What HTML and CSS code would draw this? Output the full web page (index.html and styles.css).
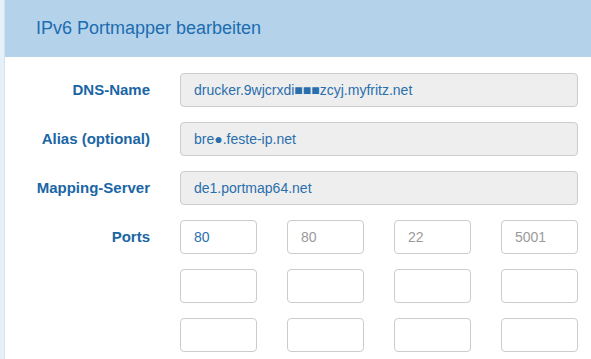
FILE: index.html
```html
<!DOCTYPE html>
<html lang="de">
<head>
    <meta charset="UTF-8">
    <meta name="viewport" content="width=device-width, initial-scale=1.0">
    <title>IPv6 Portmapper bearbeiten</title>
    <link rel="stylesheet" href="styles.css">
</head>
<body>
    <div class="panel">
        <div class="panel-heading">
            <h3>IPv6 Portmapper bearbeiten</h3>
        </div>
        <div class="panel-body">
            <form class="form-grid">
                <label for="dns">DNS-Name</label>
                <input type="text" id="dns" class="readonly" value="drucker.9wjcrxdi&#9632;&#9632;&#9632;zcyj.myfritz.net" readonly>

                <label for="alias">Alias (optional)</label>
                <input type="text" id="alias" class="readonly" value="bre&#9679;.feste-ip.net" readonly>

                <label for="server">Mapping-Server</label>
                <input type="text" id="server" class="readonly" value="de1.portmap64.net" readonly>

                <label for="p1">Ports</label>
                <div class="ports">
                    <input type="text" id="p1" value="80">
                    <input type="text" placeholder="80">
                    <input type="text" placeholder="22">
                    <input type="text" placeholder="5001">
                    <input type="text">
                    <input type="text">
                    <input type="text">
                    <input type="text">
                    <input type="text">
                    <input type="text">
                    <input type="text">
                    <input type="text">
                </div>
            </form>
        </div>
    </div>
</body>
</html>
```

FILE: styles.css
```css
* {
    margin: 0;
    padding: 0;
    box-sizing: border-box;
    font-family: 'Liberation Sans', Arial, sans-serif;
}

body {
    background: #e6f0f8;
    padding-left: 4px;
    overflow: hidden;
}

.panel {
    background: #fff;
    border-left: 1px solid #d3e2ee;
    min-height: 100vh;
}

.panel-heading {
    background: #b4d3ea;
    height: 57px;
    padding: 18px 0 0 31px;
}

.panel-heading h3 {
    font-size: 18px;
    font-weight: normal;
    color: #1c6cb1;
}

.panel-body {
    padding: 16px 13px 0 0;
}

.form-grid {
    display: grid;
    grid-template-columns: 145px 1fr;
    column-gap: 30px;
    row-gap: 15px;
    align-items: start;
}

.form-grid label {
    text-align: right;
    font-size: 15px;
    font-weight: bold;
    color: #1a66a5;
    line-height: 34px;
}

input[type="text"] {
    height: 34px;
    width: 100%;
    padding: 0 13px;
    border: 1px solid #cccccc;
    border-radius: 4px;
    background: #fff;
    color: #2a6fad;
    font-size: 14px;
    outline: none;
}

input::placeholder {
    color: #9a9a9a;
}

input.readonly {
    background: #eeeeee;
}

.ports {
    display: grid;
    grid-template-columns: repeat(4, 1fr);
    column-gap: 30px;
    row-gap: 15px;
}
```
